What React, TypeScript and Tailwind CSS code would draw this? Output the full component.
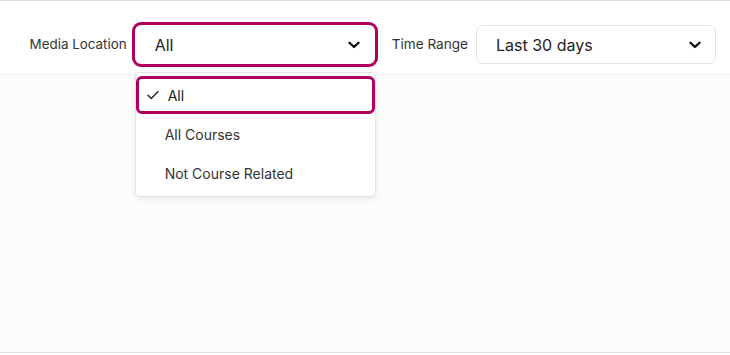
import React from "react";

function Chevron() {
  return (
    <svg width="12" height="8" viewBox="0 0 12 8" fill="none" className="shrink-0">
      <path d="M1.5 1.75 L6 6 L10.5 1.75" stroke="#111" strokeWidth="2.4" strokeLinecap="round" strokeLinejoin="round" />
    </svg>
  );
}

function Check() {
  return (
    <svg width="12" height="10" viewBox="0 0 12 10" fill="none">
      <path d="M1 5.2 L4.3 8.5 L11 1.5" stroke="#222" strokeWidth="1.4" strokeLinecap="round" strokeLinejoin="round" />
    </svg>
  );
}

export default function App() {
  return (
    <div
      className="w-[730px] h-[355px] bg-[#fcfcfc] border-t border-[#dedede] flex flex-col overflow-hidden"
      style={{ fontFamily: "Inter, 'Noto Sans', sans-serif" }}
    >
      <div className="h-[74px] bg-white border-b border-[#f1f1f1] flex justify-end items-start pt-[24px] pr-[14px] gap-[17px]">
        <div className="flex items-center gap-[8px]">
          <span className="text-[13.4px] text-[#333]">Media Location</span>
          <div className="relative">
            <div className="w-[240px] h-[39px] rounded-[6px] bg-white outline outline-[3px] outline-[#b0005b] flex items-center justify-between pl-[20px] pr-[15px]">
              <span className="text-[16px] text-[#222]">All</span>
              <Chevron />
            </div>
            <div className="absolute left-0 top-[47px] w-[241px] bg-white border border-[#e2e2e2] rounded-[5px] shadow-[0_2px_6px_rgba(0,0,0,0.08)] pt-[3px] pb-[3px] z-10">
              <div className="relative h-[38px] flex items-center pl-[29px] rounded-[6px] border-[3px] border-[#b0005b] mb-[1px]">
                <span className="absolute left-[8px] top-[11px]">
                  <Check />
                </span>
                <span className="text-[14px] text-[#222]">All</span>
              </div>
              <div className="h-[39px] flex items-center pl-[29px]">
                <span className="text-[14px] text-[#333]">All Courses</span>
              </div>
              <div className="h-[39px] flex items-center pl-[29px]">
                <span className="text-[14px] text-[#333]">Not Course Related</span>
              </div>
            </div>
          </div>
        </div>
        <div className="flex items-center gap-[8px]">
          <span className="text-[13.6px] text-[#333]">Time Range</span>
          <div className="w-[240px] h-[39px] rounded-[6px] bg-white border border-[#e3e3e3] flex items-center justify-between pl-[19px] pr-[14px]">
            <span className="text-[16px] text-[#222]">Last 30 days</span>
            <Chevron />
          </div>
        </div>
      </div>
      <div className="flex-1" />
      <div className="h-[3px] border-t border-[#dedede] bg-[#fcfcfc]" />
    </div>
  );
}
